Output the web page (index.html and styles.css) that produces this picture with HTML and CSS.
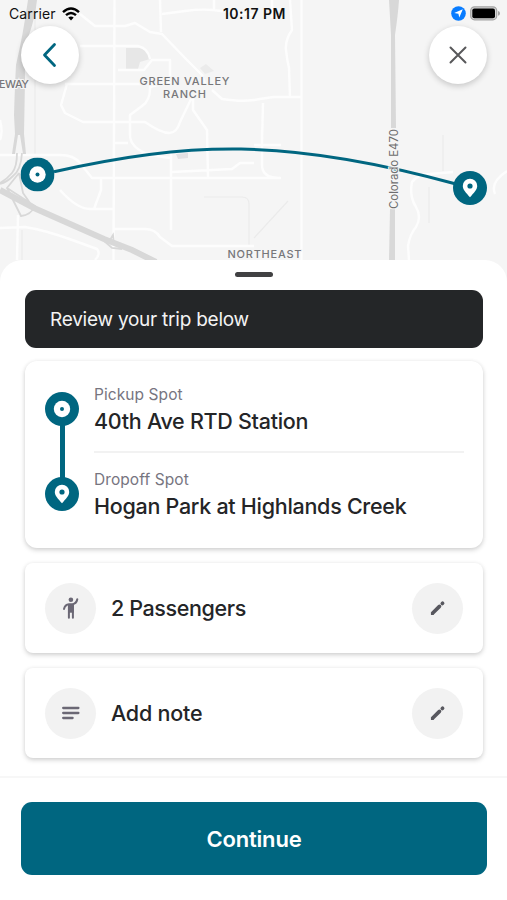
FILE: index.html
```html
<!DOCTYPE html>
<html lang="en">
<head>
<meta charset="utf-8">
<title>Review trip</title>
<link rel="stylesheet" href="styles.css">
</head>
<body>
<svg class="defs" aria-hidden="true">
  <symbol id="origin" viewBox="0 0 34 34"><circle cx="17" cy="17" r="17" fill="#006680"/><circle cx="17" cy="17" r="8.2" fill="#fff"/><circle cx="17" cy="17" r="2" fill="#006680"/></symbol>
  <symbol id="destination" viewBox="0 0 34 34"><circle cx="17" cy="17" r="17" fill="#006680"/><path d="M17 26.2C13 21.6 9.8 18.5 9.8 14.900a7.200 7.200 0 0 1 14.400 0C24.200 18.500 21 21.600 17 26.200z" fill="#fff"/><circle cx="17" cy="15" r="2.600" fill="#006680"/></symbol>
  <symbol id="pencil" viewBox="0 0 24 24"><g stroke="#58585f" stroke-linecap="round" stroke-width="4"><path d="M6.300 17.500l7.300-7.300M16.700 7.100l.3-.3"/></g><path d="M4.300 16v3.500h3.500z" fill="#58585f"/></symbol>
</svg>
<main class="screen">
  <section class="map">
    <svg class="map-art" viewBox="0 0 507 284" width="507" height="284">
      <rect width="507" height="284" fill="#f5f5f5"/>
      <path d="M126 48h14q10 2 10 11l-10 3-2 7-12 1z" fill="#e7e7e7"/>
      <path d="M200 68l6-4 8 7-9 3z" fill="#ebebeb"/>
      <path d="M176 154l12-1v5l-10 1z" fill="#e2e1e3"/>
      <g fill="none" stroke="#ebebeb" stroke-width="1.200">
        <path d="M35 0v155M204 197h38q7 0 7 7v42M22 230v30M254 238l34-37M443 135v36M429 187v36"/>
      </g>
      <g fill="none" stroke="#fdfdfd" stroke-width="2.400" stroke-linejoin="round">
        <path d="M114.500 0L113.500 260M301.500 0v260M80 14l15 12h30l10-3 15 9 12 2 23 24 17 17 3 9M160 0l1 32M162 14l23-3q15-2 28-1l41 5M214 0v10M80 46h58q10 2 12 13M118 70h26l8-10h18v22l-20 5M65 84h88M67 84l-6 21 4 8 18 9h62q16 11 24 11 8 0 11-11l13-27M150 85q1 15-8 21l-12 9v20q0 13 20 20l20 3M114 143h14M193 95v15l14 20 1 47M212 90l10 9q20 3 32 1t20-3h27M272 0v18M290 0l2 30q-7 10-6 20t3 18l1 29M263 103l-1 39M0 155h60q14 0 20 8l12 15h162M60 190q17 19 30 19h24M101 178v12l-7 19M171 150v80M172 172l60-3 8-6h14M113 229h32q10 0 15 8l12 9h82M0 228l25-1q20 3 50 14l22 8q4 5-2 11M18 215l-1 45M254 145h27M262 130v35q0 13 18 13h-26"/>
        <path d="M409 260l-1-14q2-12 8-19 6-10 0-20-7-11-4-25 6-8 18-8l23-2M495 194q-5-12 12-23M0 120q3 12 0 20"/>
      </g>
      <g fill="#d8d8d8">
        <path d="M28 0h9q-2 18-8 35-5 24-4 45l-1 54 2 20h-3l-3-19h-2l-3 19h-3l3-20-1-19q1-32 2-50Q23 35 28 0z"/>
        <path d="M389 0h10q-1 15-4 35l1 93h-5V35z"/>
        <path d="M390 209h5v52h-6z"/>
      </g>
      <g fill="none" stroke="#d8d8d8">
        <path d="M0 190q17 9 34 18l70 31 28 11 24 12" stroke-width="6"/>
        <path d="M17 153q0 14-5 20-5 6-12 10M22 153q-1 17-9 23-6 6-13 8M7 188l14 28q10-1 14-10L7 188l12-15M19 173l4 20q5 7 9 13M103 240l9 8 10 1M110 240l3-5 1 9" stroke-width="1.800"/>
      </g>
      <path d="M54 171.700C188 142 285 137 456 184" fill="none" stroke="#006680" stroke-width="3"/>
      <use href="#origin" x="20.500" y="157.500" width="34" height="34"/>
      <use href="#destination" x="453" y="171" width="34" height="34"/>
      <g class="place">
        <text x="139.500" y="85" textLength="90">GREEN VALLEY</text>
        <text x="163" y="98" textLength="43">RANCH</text>
        <text x="-1" y="88" textLength="30">EWAY</text>
        <text x="227.500" y="258" textLength="74">NORTHEAST</text>
        <text class="road" transform="translate(398 209) rotate(-90)" textLength="80">Colorado E470</text>
      </g>
    </svg>
    <header class="status">
      <div class="carrier"><span>Carrier</span>
        <svg width="18" height="14" viewBox="0 0 18 14"><g fill="none" stroke="#000" stroke-width="2.400"><path d="M1 5.200q8-7.400 16 0M4 8.200q5-4.600 10 0"/></g><path d="M6.300 10.500q2.700-2.200 5.400 0L9 13.500z"/></svg>
      </div>
      <time>10:17 PM</time>
      <div class="power">
        <svg width="15" height="15" viewBox="0 0 15 15"><circle cx="7.500" cy="7.500" r="7.300" fill="#087cff"/><path d="M11.800 3.300L8.300 11.500 7.400 7.700 3.200 7z" fill="#fff"/></svg>
        <svg width="30" height="15" viewBox="0 0 30 15"><rect x=".7" y=".8" width="26" height="13" rx="3.800" fill="#d6d6d6" stroke="#a4a4a4" stroke-width="1.200"/><rect x="2.300" y="2.500" width="22.700" height="9.700" rx="2"/><path d="M28 5q2 .5 2 2.400T28 9.800z" fill="#a4a4a4"/></svg>
      </div>
    </header>
    <nav class="controls">
      <button class="round" aria-label="Back"><svg width="58" height="58" viewBox="0 0 58 58"><path d="M33.500 18.500L23.500 29l10 10.500" fill="none" stroke="#006680" stroke-width="2.800" stroke-linecap="round" stroke-linejoin="round"/></svg></button>
      <button class="round" aria-label="Close"><svg width="58" height="58" viewBox="0 0 58 58"><path d="M21.500 21.500l15 15m0-15l-15 15" fill="none" stroke="#58585a" stroke-width="2" stroke-linecap="round"/></svg></button>
    </nav>
  </section>
  <section class="sheet">
    <div class="handle"></div>
    <div class="banner"><span>Review your trip below</span></div>
    <div class="card trip">
      <div class="route"><svg width="34" height="34"><use href="#origin"/></svg><i></i><svg width="34" height="34"><use href="#destination"/></svg></div>
      <div class="stops">
        <div class="stop"><small>Pickup Spot</small><strong>40th Ave RTD Station</strong></div>
        <div class="stop"><small>Dropoff Spot</small><strong>Hogan Park at Highlands Creek</strong></div>
      </div>
    </div>
    <div class="card row">
      <span class="disc"><svg width="24" height="24" viewBox="0 0 24 24"><g fill="none" stroke="#6b6875" stroke-width="2" stroke-linecap="round" stroke-linejoin="round"><path d="M5 13Q6 8.700 10 8.300h3.500Q17.500 7.500 18.300 3.300"/><path d="M9.900 9v12.700M13.900 9v12.700"/></g><path d="M9 8h5.800v8.700H9z" fill="#6b6875"/><circle cx="11.900" cy="3.800" r="2.300" fill="#6b6875"/></svg></span>
      <span>2 Passengers</span>
      <button class="disc edit" aria-label="Edit passengers"><svg width="22" height="22"><use href="#pencil"/></svg></button>
    </div>
    <div class="card row">
      <span class="disc"><svg width="24" height="24" viewBox="0 0 24 24"><path d="M4.200 7h15.200M4.200 12h15.200M4.200 17h9.400" stroke="#6b6875" stroke-width="2.300" stroke-linecap="round"/></svg></span>
      <span>Add note</span>
      <button class="disc edit" aria-label="Edit note"><svg width="22" height="22"><use href="#pencil"/></svg></button>
    </div>
  </section>
  <footer class="footer"><button class="continue"><span>Continue</span></button></footer>
</main>
</body>
</html>
```
FILE: styles.css
```css
* { box-sizing: border-box; }
body { margin: 0; background: #fff; color: #242527; font-family: Inter, "Liberation Sans", sans-serif; }
button { border: 0; padding: 0; font: inherit; }
svg { display: block; }
.defs { position: absolute; width: 0; height: 0; }
.screen { width: 507px; height: 900px; overflow: hidden; display: flex; flex-direction: column; }
.map { display: grid; height: 284px; flex: none; grid-template-rows: 27px 1fr; }
.map-art { grid-area: 1 / 1 / 3 / 2; }
.place { font-size: 11px; font-weight: 500; fill: #77777a; paint-order: stroke; stroke: #f5f5f5; stroke-width: 2px; }
.place .road { font-size: 11.5px; font-weight: 400; fill: #6d6d6d; }
.status { grid-area: 1 / 1; z-index: 1; display: grid; grid-template-columns: 1fr auto 1fr; align-items: center; padding: 0 7px 0 9px; color: #111; font-size: 14px; }
.carrier { display: flex; align-items: center; gap: 6px; letter-spacing: .1px; }
.status time { font-weight: 600; font-size: 14px; letter-spacing: .5px; }
.power { display: flex; justify-content: flex-end; align-items: center; gap: 4px; }
.controls { grid-area: 2 / 1; z-index: 1; display: flex; justify-content: space-between; align-items: flex-start; padding: 0 20px 0 21px; margin-top: -1px; }
.round { width: 58px; height: 58px; border-radius: 50%; background: #fff; box-shadow: 0 2px 6px rgba(0,0,0,.2); }
.sheet { position: relative; z-index: 2; flex: none; height: 516px; margin-top: -24px; padding: 12px 24px 0 25px; background: #fff; border-radius: 22px 22px 0 0; display: flex; flex-direction: column; }
.handle { width: 38px; height: 5px; border-radius: 3px; background: #414143; align-self: center; flex: none; }
.banner { margin-top: 13px; height: 58px; flex: none; border-radius: 11px; background: #242628; color: #f3f3f3; padding-left: 25px; display: flex; align-items: center; font-size: 19px; letter-spacing: -.24px; }
.card { background: #fff; box-shadow: 0 2px 5px rgba(0,0,0,.18), 0 0 4px rgba(0,0,0,.04); flex: none; }
.trip { margin-top: 13px; height: 187px; border-radius: 12px; padding: 0 19px 0 20px; display: flex; gap: 15px; }
.route { display: flex; flex-direction: column; align-items: center; padding-top: 31px; }
.route i { height: 53px; width: 5px; margin: -1px 0; background: #006680; }
.stops { flex: 1; padding-top: 7px; }
.stop { height: 85px; padding-top: 17px; display: flex; flex-direction: column; white-space: nowrap; }
.stop:first-child { border-bottom: 2px solid #f2f2f2; }
.stop small { font-size: 15.5px; line-height: 20px; color: #77757f; letter-spacing: .08px; }
.stop strong { font-size: 21.5px; line-height: 33px; font-weight: 450; letter-spacing: -.28px; }
.row { height: 90px; border-radius: 8px; margin-top: 15px; display: flex; align-items: center; padding: 0 20px; font-size: 21.5px; font-weight: 450; letter-spacing: -.38px; }
.disc { width: 51px; height: 51px; border-radius: 50%; background: #f2f2f2; display: flex; align-items: center; justify-content: center; margin-right: 15px; }
.edit { margin: 0 0 0 auto; }
.row:last-child { letter-spacing: -.22px; }
.footer { flex: 1; border-top: 2px solid #f7f7f7; padding: 24px 20px 0 21px; }
.continue { display: block; width: 100%; height: 73px; border-radius: 11px; background: #006680; color: #fff; font-size: 22px; font-weight: 600; letter-spacing: -.2px; }
```
